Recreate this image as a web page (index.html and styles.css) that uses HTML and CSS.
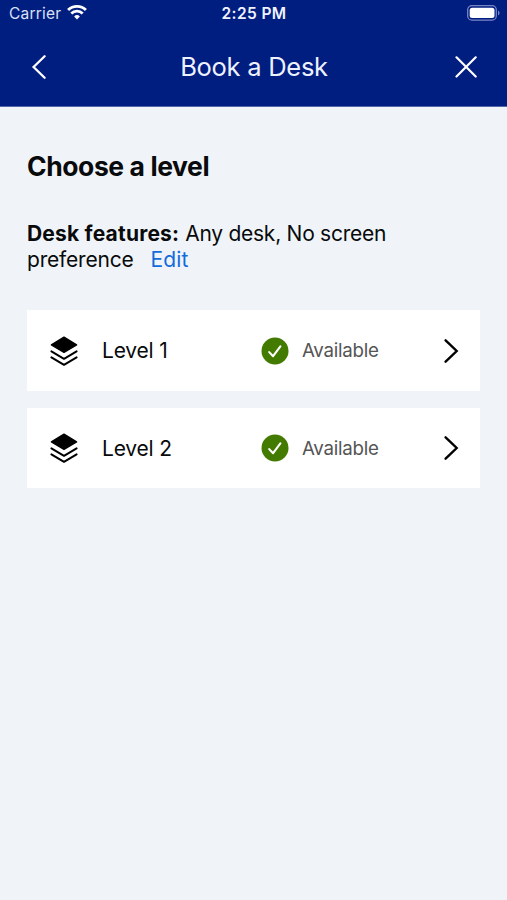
FILE: index.html
```html
<!DOCTYPE html>
<html lang="en">
<head>
<meta charset="utf-8">
<title>Book a Desk</title>
<link rel="stylesheet" href="styles.css">
</head>
<body>
<header class="header">
  <div class="status">
    <div class="carrier"><span class="carrier-name">Carrier</span>
      <svg class="wifi" width="20" height="15" viewBox="0 0 20 15" fill="none" stroke="#fff" stroke-width="2.8"><path d="M1.1 5.1a12.6 12.6 0 0 1 17.8 0M4.3 8.5a8 8 0 0 1 11.4 0"/><path d="M10 14.5 7.1 11.5a4.1 4.1 0 0 1 5.8 0z" fill="#fff" stroke="none"/></svg>
    </div>
    <span class="time">2:25 PM</span>
    <svg class="battery" width="33" height="16" viewBox="0 0 33 16"><rect x=".7" y=".7" width="28.6" height="14.4" rx="4.2" fill="none" stroke="#7886c4" stroke-width="1.3"/><rect x="2.7" y="2.7" width="24.8" height="10.4" rx="2.5" fill="#fff"/><path d="M31 5.4v5q1.6-.8 1.6-2.5T31 5.4z" fill="#7886c4"/></svg>
  </div>
  <nav class="nav">
    <svg width="15" height="24" viewBox="0 0 15 24" fill="none" stroke="#fff" stroke-width="2.3" stroke-linecap="round"><path d="M13.6 1.3 2.6 12l11 10.7"/></svg>
    <h1 class="title">Book a Desk</h1>
    <svg width="22" height="22" viewBox="0 0 22 22" fill="none" stroke="#fff" stroke-width="2.2" stroke-linecap="round"><path d="m1.5 1.3 19.2 19.2m0-19.2L1.5 20.5"/></svg>
  </nav>
</header>
<main class="main">
  <h2 class="heading">Choose a level</h2>
  <p class="features"><b class="label">Desk features:</b> <span class="value">Any desk, No screen</span><br><span class="pref">preference</span><a class="edit">Edit</a></p>
  <div class="levels">
    <div class="card">
      <svg class="layers" width="28" height="30" viewBox="0 0 28 30" fill="none" stroke="#000" stroke-width="2" stroke-linecap="round" stroke-linejoin="round"><path d="M14 1.2 26.6 8.8 14 16.4 1.4 8.8z" fill="#000" stroke-width="1.4"/><path d="M1.4 15.4 14 22.8l12.6-7.4M1.4 21.4 14 28.8l12.6-7.4"/></svg>
      <span class="name">Level 1</span>
      <svg class="check" width="28" height="28" viewBox="0 0 28 28" fill="none"><circle cx="14" cy="14" r="13.5" fill="#437a00"/><path d="m8.2 15.1 3.9 4.1 7.3-9.9" stroke="#fff" stroke-width="2.1" stroke-linecap="round" stroke-linejoin="round"/></svg>
      <span class="state">Available</span>
      <svg class="chevron" width="15" height="24" viewBox="0 0 15 24" fill="none" stroke="#000" stroke-width="2.4" stroke-linecap="round"><path d="m1.6 1.3 11.1 10.7L1.6 22.7"/></svg>
    </div>
    <div class="card">
      <svg class="layers" width="28" height="30" viewBox="0 0 28 30" fill="none" stroke="#000" stroke-width="2" stroke-linecap="round" stroke-linejoin="round"><path d="M14 1.2 26.6 8.8 14 16.4 1.4 8.8z" fill="#000" stroke-width="1.4"/><path d="M1.4 15.4 14 22.8l12.6-7.4M1.4 21.4 14 28.8l12.6-7.4"/></svg>
      <span class="name">Level 2</span>
      <svg class="check" width="28" height="28" viewBox="0 0 28 28" fill="none"><circle cx="14" cy="14" r="13.5" fill="#437a00"/><path d="m8.2 15.1 3.9 4.1 7.3-9.9" stroke="#fff" stroke-width="2.1" stroke-linecap="round" stroke-linejoin="round"/></svg>
      <span class="state">Available</span>
      <svg class="chevron" width="15" height="24" viewBox="0 0 15 24" fill="none" stroke="#000" stroke-width="2.4" stroke-linecap="round"><path d="m1.6 1.3 11.1 10.7L1.6 22.7"/></svg>
    </div>
  </div>
</main>
</body>
</html>
```
FILE: styles.css
```css
* { box-sizing: border-box; }
body {
  margin: 0;
  min-height: 900px;
  background: #f0f4f8;
  color: #080a0c;
  font-family: Inter, "Liberation Sans", sans-serif;
}
svg { display: block; flex: none; }
h1, h2, p { margin: 0; }
.header {
  height: 107px;
  background: #001d80;
  border-bottom: 1px solid #5266ab;
  color: #fff;
}
.status {
  display: grid;
  grid-template-columns: 1fr auto 1fr;
  align-items: center;
  height: 26px;
  padding: 0 8px 0 9px;
}
.carrier { display: flex; align-items: center; gap: 6px; color: #dbe1f5; font-size: 15.5px; letter-spacing: .2px; }
.wifi { margin-top: -1px; }
.time { font-size: 15.5px; font-weight: 600; letter-spacing: .4px; color: #f0f3ff; }
.battery { justify-self: end; margin: -1px -1px 0 0; }
.nav {
  display: grid;
  grid-template-columns: 22px 1fr 22px;
  align-items: center;
  height: 81px;
  padding: 0 30px 0 31px;
}
.title { font-size: 25.5px; font-weight: 400; line-height: 32px; letter-spacing: -.27px; text-align: center; color: #eef2ff; }
.main { padding: 42px 27px 0; }
.heading { font-size: 26.5px; font-weight: 700; line-height: 34px; letter-spacing: -.42px; }
.features { margin-top: 38px; font-size: 21px; line-height: 26px; white-space: nowrap; }
.label { font-weight: 700; letter-spacing: .2px; }
.value { letter-spacing: -.26px; }
.pref { letter-spacing: -.2px; }
.edit { margin-left: 17px; letter-spacing: .1px; color: #126bdc; }
.levels { display: grid; gap: 17px; margin-top: 37px; }
.card {
  display: grid;
  grid-template-columns: 52px 159px 41px 1fr 15px;
  align-items: center;
  height: 81px;
  padding: 0 21px 0 23px;
  background: #fff;
}
.card + .card { height: 80px; }
.name { font-size: 21px; letter-spacing: -.2px; }
.state { font-size: 18.7px; letter-spacing: -.25px; color: #555; }
```
